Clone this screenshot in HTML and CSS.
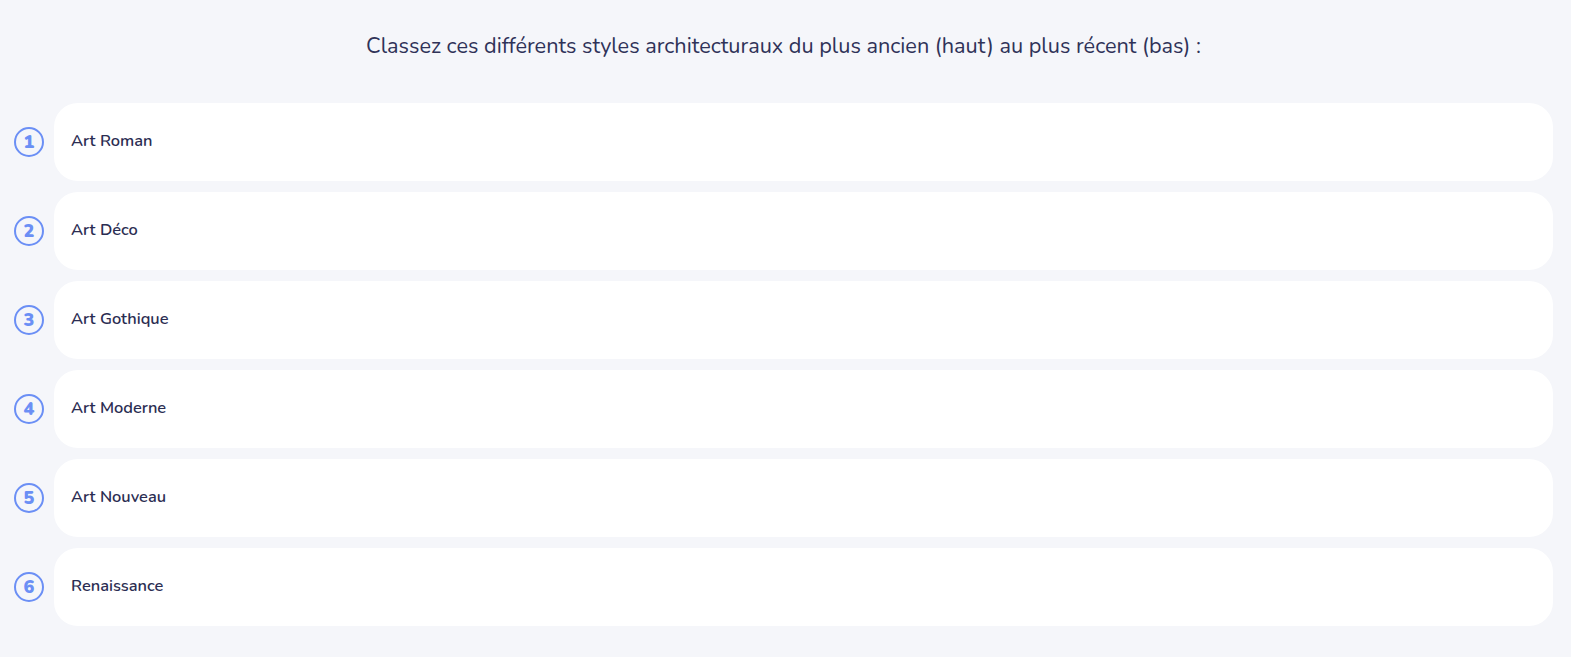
FILE: index.html
```html
<!DOCTYPE html>
<html lang="fr">
<head>
<meta charset="utf-8">
<title>Classement</title>
<link rel="stylesheet" href="styles.css">
</head>
<body>
<main class="quiz">
  <h1 class="question">Classez ces différents styles architecturaux du plus ancien (haut) au plus récent (bas) :</h1>
  <ol class="list">
    <li class="row"><span class="num">1</span><div class="card">Art Roman</div></li>
    <li class="row"><span class="num">2</span><div class="card">Art Déco</div></li>
    <li class="row"><span class="num">3</span><div class="card">Art Gothique</div></li>
    <li class="row"><span class="num">4</span><div class="card">Art Moderne</div></li>
    <li class="row"><span class="num">5</span><div class="card">Art Nouveau</div></li>
    <li class="row"><span class="num">6</span><div class="card">Renaissance</div></li>
  </ol>
</main>
</body>
</html>
```
FILE: styles.css
```css
html, body {
  margin: 0;
  padding: 0;
  background: #f5f6fa;
}
body {
  font-family: "Nunito", "Lato", "Open Sans", sans-serif;
  color: #2b2d52;
}
.quiz {
  padding: 31px 18px 0 14px;
}
.question {
  margin: 0;
  text-align: center;
  font-size: 21.7px;
  font-weight: 400;
  line-height: 30px;
  color: #2f3258;
}
.list {
  list-style: none;
  margin: 42px 0 0;
  padding: 0;
  display: flex;
  flex-direction: column;
  gap: 11px;
}
.row {
  display: flex;
  align-items: center;
  gap: 10px;
}
.num {
  flex: none;
  width: 26px;
  height: 26px;
  border: 2px solid #6b8ff5;
  border-radius: 50%;
  display: flex;
  align-items: center;
  justify-content: center;
  color: #6b8ff5;
  font-weight: 900;
  font-size: 18px;
  line-height: 1;
}
.card {
  flex: 1;
  height: 78px;
  box-sizing: border-box;
  background: #ffffff;
  border-radius: 24px;
  display: flex;
  align-items: center;
  padding: 0 0 3px 17px;
  font-size: 16.4px;
  font-weight: 600;
  color: #2b2d52;
}
```
